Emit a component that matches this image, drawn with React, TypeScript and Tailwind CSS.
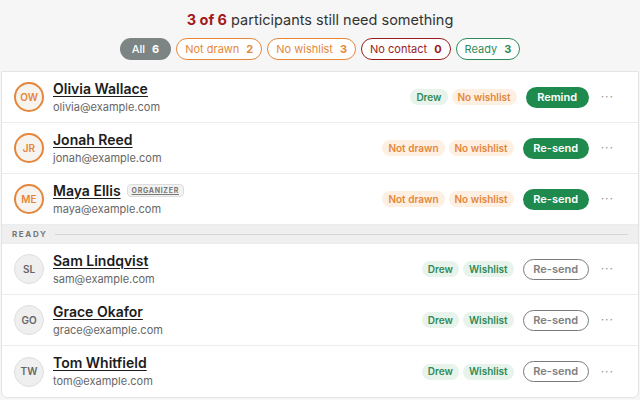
import React from 'react';

type Tag = { label: string; tone: 'green' | 'orange' };
type Person = {
  initials: string;
  name: string;
  email: string;
  organizer?: boolean;
  tags: Tag[];
  action: string;
  ready?: boolean;
};

const pending: Person[] = [
  { initials: 'OW', name: 'Olivia Wallace', email: 'olivia@example.com', tags: [{ label: 'Drew', tone: 'green' }, { label: 'No wishlist', tone: 'orange' }], action: 'Remind' },
  { initials: 'JR', name: 'Jonah Reed', email: 'jonah@example.com', tags: [{ label: 'Not drawn', tone: 'orange' }, { label: 'No wishlist', tone: 'orange' }], action: 'Re-send' },
  { initials: 'ME', name: 'Maya Ellis', email: 'maya@example.com', organizer: true, tags: [{ label: 'Not drawn', tone: 'orange' }, { label: 'No wishlist', tone: 'orange' }], action: 'Re-send' },
];

const ready: Person[] = [
  { initials: 'SL', name: 'Sam Lindqvist', email: 'sam@example.com', tags: [{ label: 'Drew', tone: 'green' }, { label: 'Wishlist', tone: 'green' }], action: 'Re-send', ready: true },
  { initials: 'GO', name: 'Grace Okafor', email: 'grace@example.com', tags: [{ label: 'Drew', tone: 'green' }, { label: 'Wishlist', tone: 'green' }], action: 'Re-send', ready: true },
  { initials: 'TW', name: 'Tom Whitfield', email: 'tom@example.com', tags: [{ label: 'Drew', tone: 'green' }, { label: 'Wishlist', tone: 'green' }], action: 'Re-send', ready: true },
];

const Row: React.FC<{ p: Person; last?: boolean }> = ({ p, last }) => (
  <div className={`flex items-center h-[51px] pl-3 pr-[24px] ${last ? '' : 'border-b border-[#ececec]'}`}>
    <div
      className={`w-[30px] h-[30px] rounded-full flex items-center justify-center text-[10px] font-semibold shrink-0 ${
        p.ready ? 'bg-[#efefef] border border-[#dedede] text-[#666]' : 'bg-[#f7f3ef] border-2 border-[#e5873a] text-[#e5873a]'
      }`}
    >
      {p.initials}
    </div>
    <div className="ml-[9px] flex flex-col">
      <div className="flex items-center gap-[6px]">
        <span className="text-[14px] font-semibold text-[#1c1c1c] underline underline-offset-2 decoration-1 leading-[18px]">{p.name}</span>
        {p.organizer && (
          <span className="text-[7px] font-bold tracking-[0.1em] text-[#777] bg-[#f2f2f2] border border-[#dddddd] rounded-sm px-1 leading-[11px] underline">ORGANIZER</span>
        )}
      </div>
      <span className="text-[11px] text-[#666] leading-[16px] mt-[1px]">{p.email}</span>
    </div>
    <div className="ml-auto flex items-center gap-[4px]">
      {p.tags.map((t) => (
        <span
          key={t.label}
          className={`text-[10px] font-semibold rounded-full px-[6px] h-[16px] flex items-center ${
            t.tone === 'green' ? 'bg-[#e8f3ec] text-[#2e8b57]' : 'bg-[#fdf0e3] text-[#e5873a]'
          }`}
        >
          {t.label}
        </span>
      ))}
    </div>
    <button
      className={`ml-[9px] h-[21px] rounded-full text-[11px] font-semibold flex items-center justify-center ${
        p.action === 'Remind' ? 'w-[63px]' : 'w-[66px]'
      } ${p.ready ? 'border-[1.5px] border-[#7a7a7a] text-[#808080] bg-white font-normal' : 'bg-[#1f8a4d] text-white'}`}
    >
      {p.action}
    </button>
    <span className="ml-[12px] text-[#999] text-[12px] tracking-[1px] leading-none">···</span>
  </div>
);

const Pill: React.FC<{ label: string; n: number; cls: string }> = ({ label, n, cls }) => (
  <span className={`h-[22px] rounded-full flex items-center gap-[7px] px-[8px] text-[11px] ${cls}`}>
    <span>{label}</span>
    <span className="font-bold">{n}</span>
  </span>
);

export default function App() {
  return (
    <div className="w-[640px] h-[400px] bg-[#f6f6f6] overflow-hidden" style={{ fontFamily: 'Inter, "Open Sans", sans-serif' }}>
      <div className="text-center text-[14.5px] text-[#333] pt-[10px] leading-[20px]">
        <span className="font-bold text-[#a3191c]">3 of 6</span> participants still need something
      </div>
      <div className="flex justify-center gap-[5px] mt-[8px]">
        <Pill label="All" n={6} cls="bg-[#7c8584] text-white font-medium px-[12px]" />
        <Pill label="Not drawn" n={2} cls="border-[1.5px] border-[#e5873a] text-[#e5873a] bg-white" />
        <Pill label="No wishlist" n={3} cls="border-[1.5px] border-[#e5873a] text-[#e5873a] bg-white" />
        <Pill label="No contact" n={0} cls="border-[1.5px] border-[#9b1c1c] text-[#9b1c1c] bg-white" />
        <Pill label="Ready" n={3} cls="border-[1.5px] border-[#2e8b57] text-[#2e8b57] bg-white" />
      </div>
      <div className="mt-[11px] mx-[1px] bg-white border border-[#e3e3e3] rounded-b-md">
        {pending.map((p) => (
          <Row key={p.initials} p={p} />
        ))}
        <div className="h-[19px] bg-[#efefef] flex items-center pl-[10px] pr-[10px] gap-2 border-b border-[#ececec]">
          <span className="text-[8px] font-bold tracking-[0.2em] text-[#777]">READY</span>
          <div className="flex-1 h-px bg-[#d4d4d4]" />
        </div>
        {ready.map((p, i) => (
          <Row key={p.initials} p={p} last={i === ready.length - 1} />
        ))}
      </div>
    </div>
  );
}
